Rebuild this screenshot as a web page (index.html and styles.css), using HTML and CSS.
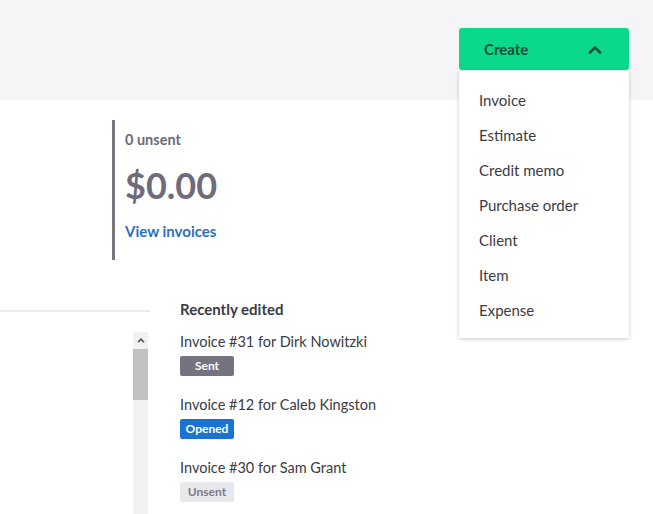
FILE: index.html
```html
<!DOCTYPE html>
<html lang="en">
<head>
  <meta charset="UTF-8">
  <title>Dashboard</title>
  <link rel="stylesheet" href="styles.css">
</head>
<body>
  <div class="topbar">
    <div class="create">
      <button class="create-btn">
        <span>Create</span>
        <svg width="14" height="9" viewBox="0 0 14 9"><path d="M2 7.5 L7 2.5 L12 7.5" fill="none" stroke="#1d4f3a" stroke-width="2.6" stroke-linecap="round" stroke-linejoin="round"/></svg>
      </button>
      <ul class="menu">
        <li>Invoice</li>
        <li>Estimate</li>
        <li>Credit memo</li>
        <li>Purchase order</li>
        <li>Client</li>
        <li>Item</li>
        <li>Expense</li>
      </ul>
    </div>
  </div>

  <div class="stat">
    <div class="stat-label">0 unsent</div>
    <div class="stat-value">$0.00</div>
    <a class="stat-link" href="#">View invoices</a>
  </div>

  <div class="lower">
    <div class="left-col">
      <div class="scrollbar">
        <div class="scroll-up">
          <svg width="8" height="5" viewBox="0 0 8 5"><path d="M1 4.2 L4 1.2 L7 4.2" fill="none" stroke="#505050" stroke-width="1.6"/></svg>
        </div>
        <div class="scroll-thumb"></div>
      </div>
    </div>
    <div class="recent">
      <h3>Recently edited</h3>
      <div class="item">
        <div class="item-title">Invoice #31 for Dirk Nowitzki</div>
        <span class="badge sent">Sent</span>
      </div>
      <div class="item">
        <div class="item-title">Invoice #12 for Caleb Kingston</div>
        <span class="badge opened">Opened</span>
      </div>
      <div class="item">
        <div class="item-title">Invoice #30 for Sam Grant</div>
        <span class="badge unsent">Unsent</span>
      </div>
    </div>
  </div>
</body>
</html>
```

FILE: styles.css
```css
body {
  margin: 0;
  font-family: Lato, "Open Sans", sans-serif;
  background: #fff;
  color: #3a3a44;
  overflow: hidden;
  height: 514px;
}
.topbar {
  height: 100px;
  background: #f5f5f7;
  display: flex;
  justify-content: flex-end;
  padding: 28px 24px 0 0;
  box-sizing: border-box;
}
.create {
  position: relative;
  width: 170px;
}
.create-btn {
  width: 170px;
  height: 42px;
  background: #0ad98b;
  border: none;
  border-radius: 3px;
  display: flex;
  align-items: center;
  justify-content: space-between;
  padding: 0 27px 0 25px;
  font-family: inherit;
  font-size: 15px;
  font-weight: 700;
  color: #1f4a39;
  cursor: pointer;
}
.menu {
  position: absolute;
  top: 43px;
  left: 0;
  width: 170px;
  margin: 0;
  padding: 12px 0 10px;
  list-style: none;
  background: #fff;
  box-shadow: 0 1px 4px rgba(0, 0, 0, 0.22);
  box-sizing: border-box;
  z-index: 2;
}
.menu li {
  height: 35px;
  line-height: 35px;
  padding-left: 20px;
  font-size: 15px;
  color: #3b3b46;
}
.stat {
  margin: 20px 0 0 112px;
  height: 140px;
  box-sizing: border-box;
  border-left: 3px solid #77757f;
  padding: 10px 0 0 10px;
}
.stat-label {
  font-size: 14.5px;
  font-weight: 700;
  line-height: 20px;
  color: #6c6b78;
}
.stat-value {
  font-size: 36px;
  font-weight: 700;
  line-height: 44px;
  margin-top: 13px;
  color: #6e6c7c;
}
.stat-link {
  display: block;
  margin-top: 14px;
  font-size: 15px;
  font-weight: 700;
  line-height: 20px;
  color: #2a72bd;
  text-decoration: none;
}
.lower {
  display: flex;
  margin-top: 39px;
}
.left-col {
  width: 150px;
  margin-top: 11px;
  border-top: 2px solid #ececec;
  display: flex;
  justify-content: flex-end;
  padding-right: 2px;
  box-sizing: border-box;
}
.scrollbar {
  width: 15px;
  margin-top: 20px;
  height: 200px;
  background: #f1f1f1;
}
.scroll-up {
  height: 17px;
  display: flex;
  align-items: center;
  justify-content: center;
}
.scroll-thumb {
  height: 51px;
  background: #c1c1c1;
}
.recent {
  margin-left: 30px;
}
.recent h3 {
  margin: 0 0 13px;
  font-size: 15px;
  font-weight: 700;
  line-height: 20px;
  color: #3a3a44;
}
.item {
  margin-bottom: 19px;
}
.item-title {
  font-size: 14.5px;
  line-height: 20px;
  color: #3a3a44;
}
.badge {
  display: inline-block;
  margin-top: 4px;
  width: 54px;
  height: 20px;
  line-height: 20px;
  border-radius: 2px;
  font-size: 12px;
  font-weight: 700;
  text-align: center;
}
.badge.sent {
  background: #74737f;
  color: #fff;
}
.badge.opened {
  background: #1a73d1;
  color: #fff;
}
.badge.unsent {
  background: #e8e8ec;
  color: #7c7b86;
}
```
